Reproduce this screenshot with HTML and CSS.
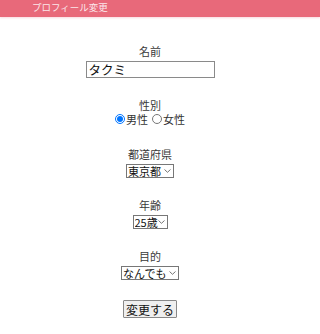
FILE: index.html
```html
<!DOCTYPE html>
<html lang="ja">
<head>
<meta charset="utf-8">
<title>プロフィール変更</title>
<link rel="stylesheet" href="styles.css">
</head>
<body>
<header class="topbar">プロフィール変更</header>
<form class="form">
  <div class="group">
    <label class="label" for="name">名前</label>
    <input class="text" id="name" type="text" value="タクミ">
  </div>
  <div class="group">
    <span class="label">性別</span>
    <div class="radios">
      <label class="radio"><input type="radio" name="sex" checked>男性</label>
      <label class="radio"><input type="radio" name="sex">女性</label>
    </div>
  </div>
  <div class="group">
    <span class="label">都道府県</span>
    <select class="sel sel-pref"><option>東京都</option></select>
  </div>
  <div class="group">
    <span class="label">年齢</span>
    <select class="sel sel-age"><option>25歳</option></select>
  </div>
  <div class="group">
    <span class="label">目的</span>
    <select class="sel sel-purpose"><option>なんでも</option></select>
  </div>
  <div class="group">
    <button class="btn" type="button">変更する</button>
  </div>
</form>
</body>
</html>
```
FILE: styles.css
```css
html, body {
  margin: 0;
  padding: 0;
  background: #fff;
}
body {
  font-family: "Noto Sans CJK JP", "Noto Sans", sans-serif;
  color: #333;
  font-size: 11px;
}
.topbar {
  height: 17px;
  background: #e8697a;
  color: #fbe7ea;
  font-size: 9.5px;
  line-height: 15px;
  padding-left: 32px;
  box-shadow: 0 1px 2px rgba(232, 105, 122, 0.25);
}
.form {
  width: 300px;
  display: flex;
  flex-direction: column;
  align-items: center;
  gap: 20px;
  padding-top: 27px;
}
.group {
  display: flex;
  flex-direction: column;
  align-items: center;
  gap: 3px;
}
.label {
  display: block;
  line-height: 14px;
  font-size: 11px;
  color: #3a3a3a;
}
.text {
  box-sizing: border-box;
  width: 129px;
  height: 17px;
  margin: 0;
  padding: 0 2px;
  border: 1px solid #8a8a8a;
  font-family: inherit;
  font-size: 12.5px;
  color: #111;
}
.radios {
  display: flex;
  align-items: center;
  height: 12px;
  line-height: 12px;
  margin-top: -2px;
  margin-bottom: 2px;
  font-size: 11px;
  color: #333;
}
.radio {
  display: flex;
  align-items: center;
  margin-right: 4px;
}
.radio:last-child {
  margin-right: 0;
}
.radio input {
  width: 10px;
  height: 10px;
  margin: 0 1px 0 0;
}
.sel {
  -webkit-appearance: none;
  appearance: none;
  box-sizing: border-box;
  height: 14px;
  margin: 0;
  padding: 0 9px 0 1px;
  border: 1px solid #777;
  border-radius: 0;
  font-family: inherit;
  font-size: 11px;
  line-height: 12px;
  color: #111;
  background-color: #fff;
  background-image: url("data:image/svg+xml,%3Csvg xmlns='http://www.w3.org/2000/svg' width='7' height='4' viewBox='0 0 7 4'%3E%3Cpath d='M0.5 0.5 L3.5 3.3 L6.5 0.5' fill='none' stroke='%23666' stroke-width='0.9'/%3E%3C/svg%3E");
  background-repeat: no-repeat;
  background-position: right 2px center;
  background-size: 7px 4px;
}
.sel-pref {
  width: 48px;
}
.sel-age {
  width: 35px;
}
.sel-purpose {
  width: 58px;
}
.btn {
  box-sizing: border-box;
  width: 54px;
  height: 18px;
  margin: 0;
  padding: 0;
  border: 1px solid #888;
  border-radius: 1px;
  background: #efefef;
  font-family: inherit;
  font-size: 12px;
  color: #111;
}
```
